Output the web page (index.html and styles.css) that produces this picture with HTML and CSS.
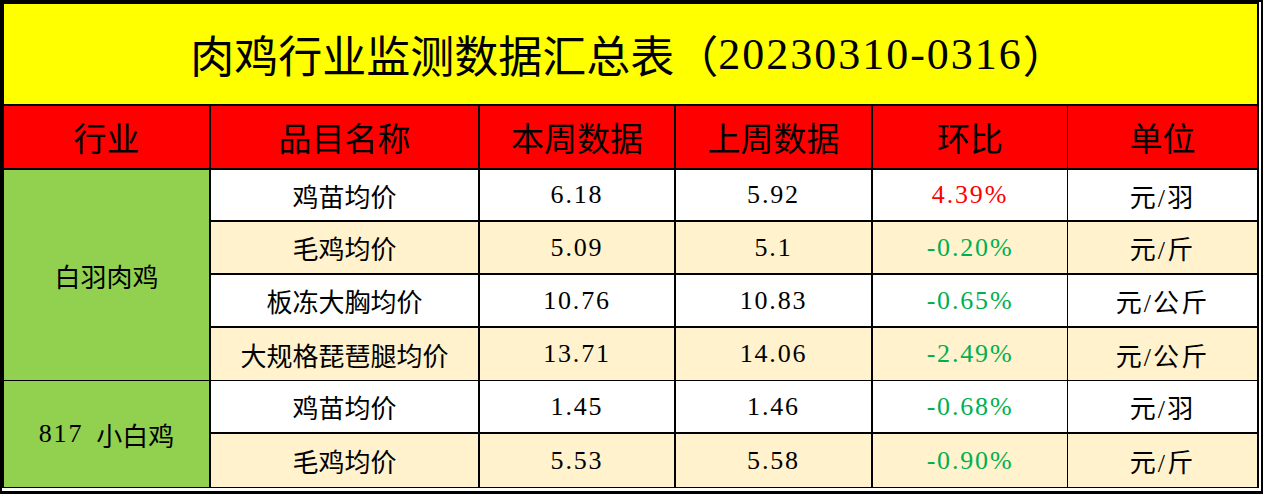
FILE: index.html
```html
<!DOCTYPE html>
<html lang="zh-CN">
<head>
<meta charset="utf-8">
<title>肉鸡行业监测数据汇总表</title>
<link rel="stylesheet" href="styles.css">
</head>
<body>
<div class="frame">
  <div class="sheet">
    <div class="grid">
      <div class="cell title">肉鸡行业监测数据汇总表（<span class="tnum">20230310-0316</span>）</div>

      <div class="cell head">行业</div>
      <div class="cell head">品目名称</div>
      <div class="cell head">本周数据</div>
      <div class="cell head">上周数据</div>
      <div class="cell head c5">环比</div>
      <div class="cell head">单位</div>

      <div class="cell group g1">白羽肉鸡</div>
      <div class="cell r1 white">鸡苗均价</div>
      <div class="cell r1 white num">6.18</div>
      <div class="cell r1 white num">5.92</div>
      <div class="cell r1 white num c5 up">4.39%</div>
      <div class="cell r1 white unit">元/羽</div>

      <div class="cell r2 beige">毛鸡均价</div>
      <div class="cell r2 beige num">5.09</div>
      <div class="cell r2 beige num">5.1</div>
      <div class="cell r2 beige num c5 down">-0.20%</div>
      <div class="cell r2 beige unit">元/斤</div>

      <div class="cell r3 white">板冻大胸均价</div>
      <div class="cell r3 white num">10.76</div>
      <div class="cell r3 white num">10.83</div>
      <div class="cell r3 white num c5 down">-0.65%</div>
      <div class="cell r3 white unit">元/公斤</div>

      <div class="cell r4 beige thin">大规格琵琶腿均价</div>
      <div class="cell r4 beige thin num">13.71</div>
      <div class="cell r4 beige thin num">14.06</div>
      <div class="cell r4 beige thin num c5 down">-2.49%</div>
      <div class="cell r4 beige thin unit">元/公斤</div>

      <div class="cell group g2"><span class="num">817</span>&nbsp;&nbsp;小白鸡</div>
      <div class="cell r5 white">鸡苗均价</div>
      <div class="cell r5 white num">1.45</div>
      <div class="cell r5 white num">1.46</div>
      <div class="cell r5 white num c5 down">-0.68%</div>
      <div class="cell r5 white unit">元/羽</div>

      <div class="cell r6 beige thin">毛鸡均价</div>
      <div class="cell r6 beige thin num">5.53</div>
      <div class="cell r6 beige thin num">5.58</div>
      <div class="cell r6 beige thin num c5 down">-0.90%</div>
      <div class="cell r6 beige thin unit">元/斤</div>
    </div>
  </div>
</div>
</body>
</html>
```

FILE: styles.css
```css
* { box-sizing: border-box; }

html, body {
  margin: 0;
  padding: 0;
  background: #000;
}

.frame {
  width: 1263px;
  height: 494px;
  background: #000;
  padding: 2px 2px 3px 2px;
}

.sheet {
  height: 489px;
  background: #fff;
  padding: 0 4px 3px 0;
}

.grid {
  display: grid;
  grid-template-columns: 207px 269px 196px 197px 195px 191px;
  grid-template-rows: 102px 64px 52px 53px 53px 53px 53px 54px;
  border-top: 2px solid #000;
  border-left: 2px solid #000;
  width: 1257px;
  font-family: "Liberation Serif", "Noto Sans CJK SC", serif;
  color: #000;
}

.cell {
  display: flex;
  align-items: center;
  justify-content: center;
  border-right: 2px solid #000;
  border-bottom: 2px solid #000;
  font-size: 26px;
  white-space: nowrap;
}

.title {
  grid-column: 1 / span 6;
  background: #ffff00;
  font-size: 44px;
  padding-right: 4px;
}

.tnum { letter-spacing: 2px; }

.head {
  background: #ff0000;
  font-size: 33px;
}

.c5 { border-right-width: 1px; }

.group {
  background: #92d050;
  grid-column: 1;
  border-bottom-width: 1px;
}
.g1 { grid-row: 3 / span 4; }
.g2 { grid-row: 7 / span 2; }

.white { background: #fff; }
.beige { background: #fff2cc; }
.thin { border-bottom-width: 1px; }

.num { letter-spacing: 0.07em; }
.unit { letter-spacing: 0.08em; }

.up { color: #ff0000; }
.down { color: #00b050; }
```
